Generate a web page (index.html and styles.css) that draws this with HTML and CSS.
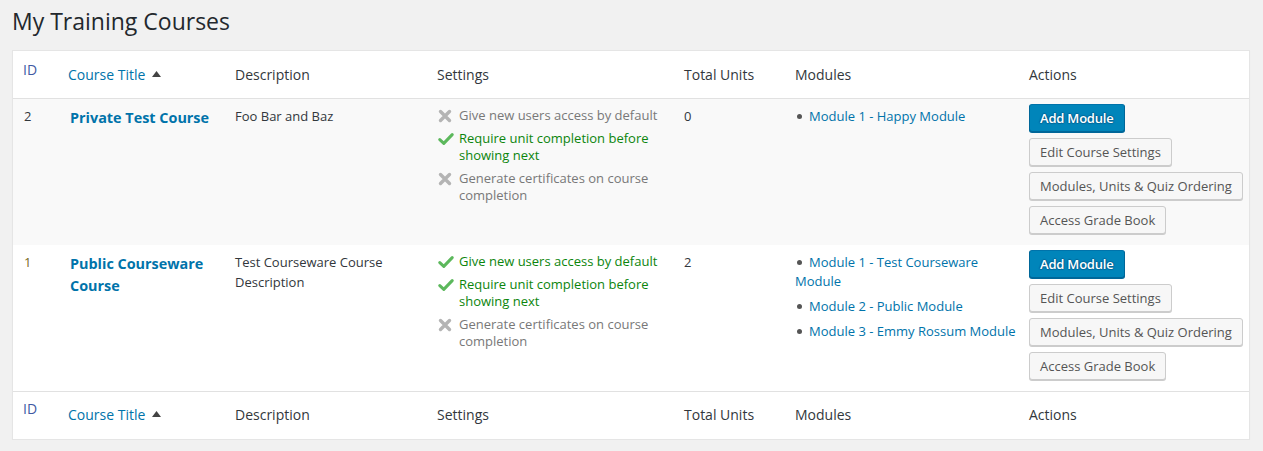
FILE: index.html
```html
<!DOCTYPE html>
<html>
<head>
<meta charset="utf-8">
<link rel="stylesheet" href="styles.css">
</head>
<body>
<div class="wrap">
  <h1 class="page-title">My Training Courses</h1>
  <table class="courses">
    <colgroup>
      <col class="c-id"><col class="c-title"><col class="c-desc"><col class="c-set"><col class="c-units"><col class="c-mod"><col class="c-act">
    </colgroup>
    <thead>
      <tr>
        <th class="th-id"><a href="#">ID</a></th>
        <th><a href="#" class="sort">Course Title <svg class="tri" width="9" height="6" viewBox="0 0 9 6"><path d="M0 6 L4.5 0 L9 6 Z" fill="#444"/></svg></a></th>
        <th>Description</th>
        <th>Settings</th>
        <th>Total Units</th>
        <th>Modules</th>
        <th>Actions</th>
      </tr>
    </thead>
    <tbody>
      <tr class="alt">
        <td class="id">2</td>
        <td><a class="row-title" href="#">Private Test Course</a></td>
        <td>Foo Bar and Baz</td>
        <td>
          <ul class="settings">
            <li class="off"><svg class="ico" width="16" height="14" viewBox="0 0 16 14"><path d="M2.5 2.5 L11.5 11.5 M11.5 2.5 L2.5 11.5" stroke="#b4b4b4" stroke-width="3.4" stroke-linecap="round"/></svg><span>Give new users access by default</span></li>
            <li class="on"><svg class="ico" width="16" height="14" viewBox="0 0 16 14"><path d="M1.8 7.6 L5.8 11.4 L14.2 2.6" stroke="#5cb85c" stroke-width="3" fill="none" stroke-linecap="round" stroke-linejoin="round"/></svg><span>Require unit completion before showing next</span></li>
            <li class="off"><svg class="ico" width="16" height="14" viewBox="0 0 16 14"><path d="M2.5 2.5 L11.5 11.5 M11.5 2.5 L2.5 11.5" stroke="#b4b4b4" stroke-width="3.4" stroke-linecap="round"/></svg><span>Generate certificates on course completion</span></li>
          </ul>
        </td>
        <td>0</td>
        <td class="mods">
          <ul class="modules">
            <li><a href="#">Module 1 - Happy Module</a></li>
          </ul>
        </td>
        <td class="actions">
          <div class="btns">
            <a href="#" class="button primary">Add Module</a>
            <a href="#" class="button">Edit Course Settings</a>
            <a href="#" class="button">Modules, Units &amp; Quiz Ordering</a>
            <a href="#" class="button">Access Grade Book</a>
          </div>
        </td>
      </tr>
      <tr>
        <td class="id id-odd">1</td>
        <td><a class="row-title" href="#">Public Courseware Course</a></td>
        <td>Test Courseware Course Description</td>
        <td>
          <ul class="settings">
            <li class="on"><svg class="ico" width="16" height="14" viewBox="0 0 16 14"><path d="M1.8 7.6 L5.8 11.4 L14.2 2.6" stroke="#5cb85c" stroke-width="3" fill="none" stroke-linecap="round" stroke-linejoin="round"/></svg><span>Give new users access by default</span></li>
            <li class="on"><svg class="ico" width="16" height="14" viewBox="0 0 16 14"><path d="M1.8 7.6 L5.8 11.4 L14.2 2.6" stroke="#5cb85c" stroke-width="3" fill="none" stroke-linecap="round" stroke-linejoin="round"/></svg><span>Require unit completion before showing next</span></li>
            <li class="off"><svg class="ico" width="16" height="14" viewBox="0 0 16 14"><path d="M2.5 2.5 L11.5 11.5 M11.5 2.5 L2.5 11.5" stroke="#b4b4b4" stroke-width="3.4" stroke-linecap="round"/></svg><span>Generate certificates on course completion</span></li>
          </ul>
        </td>
        <td>2</td>
        <td class="mods">
          <ul class="modules">
            <li><a href="#">Module 1 - Test Courseware Module</a></li>
            <li><a href="#">Module 2 - Public Module</a></li>
            <li><a href="#">Module 3 - Emmy Rossum Module</a></li>
          </ul>
        </td>
        <td class="actions">
          <div class="btns">
            <a href="#" class="button primary">Add Module</a>
            <a href="#" class="button">Edit Course Settings</a>
            <a href="#" class="button">Modules, Units &amp; Quiz Ordering</a>
            <a href="#" class="button">Access Grade Book</a>
          </div>
        </td>
      </tr>
    </tbody>
    <tfoot>
      <tr>
        <th class="th-id"><a href="#">ID</a></th>
        <th><a href="#" class="sort">Course Title <svg class="tri" width="9" height="6" viewBox="0 0 9 6"><path d="M0 6 L4.5 0 L9 6 Z" fill="#444"/></svg></a></th>
        <th>Description</th>
        <th>Settings</th>
        <th>Total Units</th>
        <th>Modules</th>
        <th>Actions</th>
      </tr>
    </tfoot>
  </table>
</div>
</body>
</html>
```

FILE: styles.css
```css
html, body {
  margin: 0;
  padding: 0;
  background: #f1f1f1;
}
body {
  font-family: "Open Sans", "Noto Sans", sans-serif;
  font-size: 13px;
  line-height: 1.5;
  color: #32373c;
}
a {
  color: #0073aa;
  text-decoration: none;
}
.wrap {
  padding: 0 12px;
}
.page-title {
  margin: 0;
  padding: 7px 0 0 0;
  font-size: 23px;
  line-height: 29px;
  font-weight: 400;
  color: #23282d;
}
.courses {
  margin-top: 14px;
  width: 1238px;
  table-layout: fixed;
  border-collapse: separate;
  border-spacing: 0;
  background: #fff;
  border: 1px solid #e5e5e5;
  box-shadow: 0 1px 1px rgba(0,0,0,0.04);
}
.c-id { width: 45px; }
.c-title { width: 167px; }
.c-desc { width: 202px; }
.c-set { width: 247px; }
.c-units { width: 111px; }
.c-mod { width: 234px; }
.c-act { width: 230px; }

.courses th {
  text-align: left;
  font-weight: 400;
  font-size: 14px;
  line-height: 20px;
  padding: 14px 10px 13px;
  color: #32373c;
  vertical-align: top;
}
.courses thead th {
  border-bottom: 1px solid #e1e1e1;
}
.courses tfoot th {
  border-top: 1px solid #e1e1e1;
  padding: 13px 10px 14px;
}
.courses thead th.th-id {
  padding-top: 9px;
  padding-bottom: 18px;
}
.courses tfoot th.th-id {
  padding-top: 7px;
  padding-bottom: 20px;
}
.th-id a {
  color: #3f5aa3;
}
.tri {
  margin-left: 3px;
  vertical-align: 3px;
}
.courses td {
  padding: 8px 10px;
  vertical-align: top;
  line-height: 19.5px;
}
.courses tr.alt td {
  background: #f9f9f9;
}
.courses td.id {
  padding-left: 11px;
}
.courses td.id-odd {
  color: #7a6a1a;
}
.row-title {
  font-weight: 700;
  font-size: 14.4px;
  line-height: 22px;
  display: inline-block;
  padding-left: 2px;
}
.settings, .modules {
  margin: 0;
  padding: 0;
  list-style: none;
}
.settings li {
  display: flex;
  align-items: flex-start;
  line-height: 17px;
  margin-bottom: 6px;
}
.settings .ico {
  flex: none;
  margin-top: 2px;
  margin-left: 1px;
  width: 16px;
  margin-right: 5px;
}
.settings li.off { color: #787878; }
.settings li.on { color: #0c850c; }
.courses td.mods {
  padding-right: 0;
}
.modules li {
  margin-bottom: 6px;
  line-height: 19px;
}
.modules li::before {
  content: "";
  display: inline-block;
  width: 5px;
  height: 5px;
  border-radius: 50%;
  background: #555;
  margin-left: 2px;
  margin-right: 7px;
  vertical-align: 2px;
}
.courses td.actions {
  padding: 5px 10px 11px;
}
.btns {
  display: flex;
  flex-direction: column;
  align-items: flex-start;
  gap: 6px;
}
.button {
  display: inline-block;
  box-sizing: border-box;
  height: 28px;
  line-height: 26px;
  padding: 0 10px 1px;
  font-size: 13px;
  border: 1px solid #ccc;
  border-radius: 3px;
  background: #f7f7f7;
  color: #555;
  box-shadow: 0 1px 0 #ccc;
  white-space: nowrap;
}
.button.primary {
  background: #0085ba;
  border-color: #0073aa #006799 #006799;
  box-shadow: 0 1px 0 #006799;
  color: #fff;
  font-weight: 600;
  letter-spacing: -0.2px;
  text-shadow: 0 -1px 1px #006799, 1px 0 1px #006799, 0 1px 1px #006799, -1px 0 1px #006799;
}
```
